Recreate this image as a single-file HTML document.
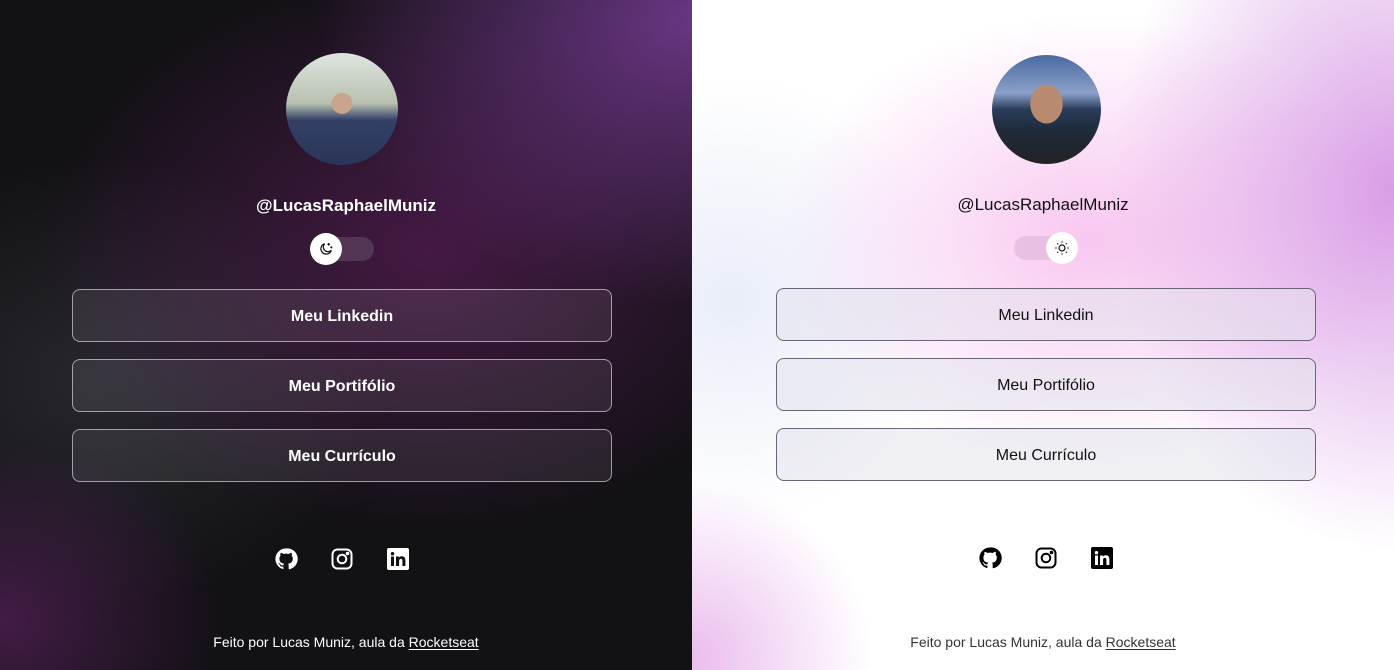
<!DOCTYPE html>
<html><head><meta charset="utf-8"><style>
*{box-sizing:border-box;margin:0;padding:0}
body{width:1394px;height:670px;overflow:hidden;font-family:"Liberation Sans",sans-serif;position:relative}
.half{position:absolute;top:0;height:670px}
#d{left:0;width:692px;background:
radial-gradient(ellipse 500px 380px at 692px 20px,rgba(120,60,150,.85),transparent 75%),
radial-gradient(ellipse 520px 380px at 430px 250px,rgba(95,30,95,.65),transparent 75%),
radial-gradient(ellipse 300px 240px at 0px 620px,rgba(100,35,105,.6),transparent 75%),
radial-gradient(ellipse 380px 300px at 100px 380px,rgba(60,60,70,.5),transparent 75%),
#121114;color:#fff}
#l{left:692px;width:702px;background:
radial-gradient(ellipse 380px 480px at 702px 190px,rgba(210,140,225,.85),transparent 75%),
radial-gradient(ellipse 420px 300px at 400px 240px,rgba(245,180,235,.75),transparent 75%),
radial-gradient(ellipse 240px 240px at 0px 660px,rgba(225,160,230,.7),transparent 75%),
radial-gradient(ellipse 300px 300px at 40px 300px,rgba(225,230,245,.7),transparent 75%),
#fff;color:#111}
.av{position:absolute;width:112px;height:112px;border-radius:50%}
.name{position:absolute;width:100%;text-align:center;font-size:17px}
.tog{position:absolute;width:64px;height:24px;border-radius:12px}
.knob{position:absolute;top:-4px;width:32px;height:32px;border-radius:50%;background:#fff;display:flex;align-items:center;justify-content:center}
.btn{position:absolute;width:540px;height:53px;border-radius:8px;display:flex;align-items:center;justify-content:center;font-size:16px;padding-top:2px}
#d .btn{border:1px solid rgba(255,255,255,.55);background:rgba(255,255,255,.08);font-weight:bold}
#l .btn{border:1px solid #6a6478;background:rgba(225,225,235,.55)}
.ic{position:absolute;top:547px;width:24px;height:24px}
.foot{position:absolute;top:634px;width:100%;text-align:center;font-size:14px}
.foot u{text-underline-offset:2px}
</style></head><body>
<div class="half" id="d">
<div class="av" style="left:286px;top:53px;background:radial-gradient(circle at 50% 45%,#c9a58c 0 12%,transparent 13%),linear-gradient(180deg,#dfe6e0 0%,#b8c0b0 45%,#334066 60%,#2a3558 100%)"></div>
<div class="name" style="top:196px;font-weight:bold">@LucasRaphaelMuniz</div>
<div class="tog" style="left:310px;top:237px;background:rgba(255,255,255,.13)"><div class="knob" style="left:0;top:-4px"><svg width="16" height="16" viewBox="0 0 24 24" fill="none" stroke="#111" stroke-width="1.8"><path d="M20 14a8 8 0 1 1-10-10 6.5 6.5 0 0 0 10 10z"/><path d="M16 3v4M14 5h4M20 8v3M18.5 9.5h3"/></svg></div></div>
<div class="btn" style="left:72px;top:289px">Meu Linkedin</div>
<div class="btn" style="left:72px;top:359px">Meu Portifólio</div>
<div class="btn" style="left:72px;top:429px">Meu Currículo</div>
<svg class="ic" style="left:274px" viewBox="0 0 24 24" fill="#fff"><path d="M12 1.5a10.5 10.5 0 0 0-3.3 20.5c.5.1.7-.2.7-.5v-2c-2.9.6-3.5-1.3-3.5-1.3-.5-1.2-1.2-1.5-1.2-1.5-.9-.7.1-.6.1-.6 1.1.1 1.6 1.1 1.6 1.1.9 1.6 2.5 1.2 3.1.9.1-.7.4-1.2.7-1.4-2.3-.3-4.8-1.2-4.8-5.2 0-1.1.4-2.1 1.1-2.8-.1-.3-.5-1.3.1-2.8 0 0 .9-.3 2.9 1.1a10 10 0 0 1 5.2 0c2-1.4 2.9-1.1 2.9-1.1.6 1.5.2 2.5.1 2.8.7.7 1.1 1.7 1.1 2.8 0 4-2.5 4.9-4.8 5.2.4.3.7 1 .7 2v3c0 .3.2.6.7.5A10.5 10.5 0 0 0 12 1.5z"/></svg>
<svg class="ic" style="left:330px" viewBox="0 0 24 24" fill="none" stroke="#fff" stroke-width="2"><rect x="2.5" y="2.5" width="19" height="19" rx="5"/><circle cx="12" cy="12" r="4.3"/><circle cx="17.5" cy="6.5" r=".8" fill="#fff"/></svg>
<svg class="ic" style="left:386px" viewBox="0 0 24 24"><rect x="1" y="1" width="22" height="22" rx="2" fill="#fff"/><path d="M5 9.5h3V19H5zM6.5 5a1.7 1.7 0 1 1 0 3.4 1.7 1.7 0 0 1 0-3.4zM10 9.5h2.9v1.3c.4-.8 1.4-1.5 2.9-1.5 3 0 3.6 2 3.6 4.6V19h-3v-4.6c0-1.1 0-2.5-1.5-2.5s-1.8 1.2-1.8 2.4V19H10z" fill="#121114"/></svg>
<div class="foot">Feito por Lucas Muniz, aula da <u>Rocketseat</u></div>
</div>
<div class="half" id="l">
<div class="av" style="left:300px;top:55px;width:109px;height:109px;background:radial-gradient(ellipse 20px 24px at 50% 45%,#b88a70 0 80%,transparent 82%),linear-gradient(180deg,#4a6aa0 0%,#8aa0c8 35%,#2a3c5a 50%,#1f2a3a 70%,#222 100%)"></div>
<div class="name" style="top:195px">@LucasRaphaelMuniz</div>
<div class="tog" style="left:322px;top:236px;background:rgba(200,160,200,.35)"><div class="knob" style="left:32px"><svg width="16" height="16" viewBox="0 0 24 24" fill="none" stroke="#111" stroke-width="1.8"><circle cx="12" cy="12" r="4.5"/><path d="M12 2v2M12 20v2M2 12h2M20 12h2M4.9 4.9l1.4 1.4M17.7 17.7l1.4 1.4M4.9 19.1l1.4-1.4M17.7 6.3l1.4-1.4"/></svg></div></div>
<div class="btn" style="left:84px;top:288px">Meu Linkedin</div>
<div class="btn" style="left:84px;top:358px">Meu Portifólio</div>
<div class="btn" style="left:84px;top:428px">Meu Currículo</div>
<svg class="ic" style="left:286px;top:546px" viewBox="0 0 24 24" fill="#000"><path d="M12 1.5a10.5 10.5 0 0 0-3.3 20.5c.5.1.7-.2.7-.5v-2c-2.9.6-3.5-1.3-3.5-1.3-.5-1.2-1.2-1.5-1.2-1.5-.9-.7.1-.6.1-.6 1.1.1 1.6 1.1 1.6 1.1.9 1.6 2.5 1.2 3.1.9.1-.7.4-1.2.7-1.4-2.3-.3-4.8-1.2-4.8-5.2 0-1.1.4-2.1 1.1-2.8-.1-.3-.5-1.3.1-2.8 0 0 .9-.3 2.9 1.1a10 10 0 0 1 5.2 0c2-1.4 2.9-1.1 2.9-1.1.6 1.5.2 2.5.1 2.8.7.7 1.1 1.7 1.1 2.8 0 4-2.5 4.9-4.8 5.2.4.3.7 1 .7 2v3c0 .3.2.6.7.5A10.5 10.5 0 0 0 12 1.5z"/></svg>
<svg class="ic" style="left:342px;top:546px" viewBox="0 0 24 24" fill="none" stroke="#000" stroke-width="2"><rect x="2.5" y="2.5" width="19" height="19" rx="5"/><circle cx="12" cy="12" r="4.3"/><circle cx="17.5" cy="6.5" r=".8" fill="#000"/></svg>
<svg class="ic" style="left:398px;top:546px" viewBox="0 0 24 24"><rect x="1" y="1" width="22" height="22" rx="2" fill="#000"/><path d="M5 9.5h3V19H5zM6.5 5a1.7 1.7 0 1 1 0 3.4 1.7 1.7 0 0 1 0-3.4zM10 9.5h2.9v1.3c.4-.8 1.4-1.5 2.9-1.5 3 0 3.6 2 3.6 4.6V19h-3v-4.6c0-1.1 0-2.5-1.5-2.5s-1.8 1.2-1.8 2.4V19H10z" fill="#fff"/></svg>
<div class="foot" style="color:#333">Feito por Lucas Muniz, aula da <u>Rocketseat</u></div>
</div>
</body></html>
